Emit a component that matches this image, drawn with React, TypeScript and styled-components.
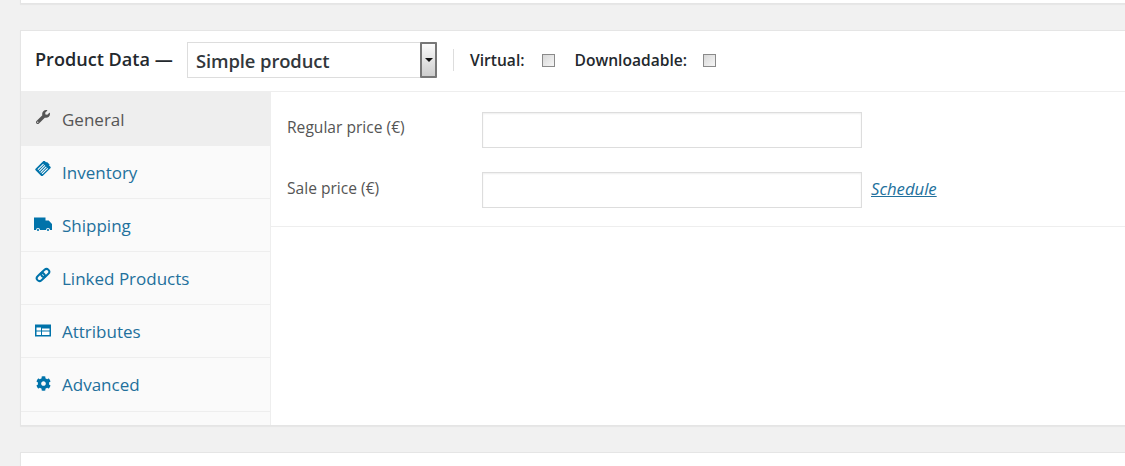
import React from "react";
import styled, { createGlobalStyle } from "styled-components";
import { FaWrench, FaCog } from "react-icons/fa";

const Global = createGlobalStyle`
  html, body { margin: 0; padding: 0; background: #f1f1f1; overflow: hidden; }
  body { width: 1125px; height: 466px; font-family: "Open Sans", "Liberation Sans", sans-serif; }
  * { box-sizing: border-box; }
`;

const Page = styled.div`
  width: 1125px;
  height: 466px;
  overflow: hidden;
  display: flex;
  flex-direction: column;
  padding-left: 20px;
`;

const Card = styled.section<{ $h: number }>`
  width: 1125px;
  flex: none;
  height: ${p => p.$h}px;
  background: #fff;
  border: 1px solid #e5e5e5;
  box-shadow: 0 1px 1px rgba(0, 0, 0, 0.04);
`;

const TopCard = styled(Card)`
  margin-top: -${p => p.$h - 4}px;
`;

const MainCard = styled(Card)`
  margin-top: 26px;
  display: flex;
  flex-direction: column;
`;

const BottomCard = styled(Card)`
  margin-top: 26px;
`;

const Header = styled.header`
  height: 61px;
  flex: none;
  display: flex;
  align-items: center;
  padding: 0 0 2px 14px;
  border-bottom: 1px solid #eee;
  color: #23282d;
`;

const Title = styled.h2`
  margin: -2px 14px 0 0;
  width: 138px;
  font-size: 18.1px;
  line-height: 24px;
  font-weight: 600;
  white-space: nowrap;
  color: #23282d;
`;

const SelectBox = styled.div`
  width: 250px;
  height: 36px;
  margin-right: 16px;
  display: flex;
  align-items: stretch;
  border: 1px solid #ddd;
  background: #fff;
`;

const SelectValue = styled.span`
  flex: 1;
  padding-left: 8px;
  font-size: 18.4px;
  font-weight: 600;
  line-height: 36px;
  color: #32373c;
  letter-spacing: -0.1px;
`;

const SelectArrow = styled.span`
  width: 17px;
  margin: -1px -1px -1px 0;
  display: flex;
  align-items: center;
  justify-content: center;
  border: 2px solid #777;
  border-radius: 1px;
  background: linear-gradient(#fbfbfb, #cdcdcd);
  &::after {
    content: "";
    border-left: 4px solid transparent;
    border-right: 4px solid transparent;
    border-top: 4px solid #111;
  }
`;

const Separator = styled.span`
  width: 1px;
  height: 22px;
  background: #ddd;
  margin-right: 16px;
`;

const CheckLabel = styled.label<{ $gap: number; $after: number }>`
  display: flex;
  align-items: center;
  gap: ${p => p.$gap}px;
  margin-right: ${p => p.$after}px;
  font-size: 15.6px;
  line-height: 20px;
  font-weight: 600;
  color: #23282d;
`;

const Check = styled.input.attrs({ type: "checkbox" })`
  appearance: none;
  margin: 1px 0 0;
  width: 13px;
  height: 13px;
  border: 1px solid #8a8a8a;
  background: linear-gradient(135deg, #d8d8d8, #f6f6f6);
`;

const Body = styled.div`
  flex: 1;
  display: flex;
  min-height: 0;
`;

const Tabs = styled.ul`
  list-style: none;
  margin: 0;
  padding: 0;
  width: 250px;
  flex: none;
  background: #fafafa;
  border-right: 1px solid #eee;
`;

const Tab = styled.li<{ $active?: boolean; $h: number }>`
  height: ${p => p.$h}px;
  display: flex;
  align-items: center;
  padding-left: 14px;
  padding-top: ${p => (p.$active ? 2 : 0)}px;
  gap: 11px;
  font-size: 17px;
  color: ${p => (p.$active ? "#555" : "#22709c")};
  background: ${p => (p.$active ? "#eee" : "transparent")};
  border-bottom: 1px solid #eee;
`;

const IconSlot = styled.span<{ $active?: boolean; $shift: number }>`
  width: 16px;
  height: 16px;
  margin-top: -${p => p.$shift * 2}px;
  flex: none;
  display: flex;
  align-items: center;
  justify-content: center;
  color: ${p => (p.$active ? "#555" : "#0073aa")};
  svg { display: block; flex: none; }
`;

const Panel = styled.div`
  flex: 1;
`;

const Fields = styled.div`
  height: 135px;
  padding-top: 20px;
  border-bottom: 1px solid #eee;
  display: flex;
  flex-direction: column;
  gap: 24px;
`;

const Field = styled.div`
  display: flex;
  align-items: center;
  height: 36px;
  padding-left: 16px;
`;

const FieldLabel = styled.label<{ $lift: number }>`
  width: 195px;
  flex: none;
  font-size: 15.6px;
  line-height: 20px;
  margin-top: -${p => p.$lift}px;
  color: #555;
`;

const TextInput = styled.input`
  width: 380px;
  height: 36px;
  flex: none;
  border: 1px solid #ddd;
  background: #fff;
  box-shadow: inset 0 1px 2px rgba(0, 0, 0, 0.07);
  outline: none;
`;

const ScheduleLink = styled.a`
  margin-left: 9px;
  margin-top: -4px;
  font-size: 16.7px;
  font-style: italic;
  color: #22709c;
  text-decoration: underline;
`;

const InventoryIcon = () => (
  <svg width="16" height="15" viewBox="0 0 16 15" fill="currentColor">
    <g transform="rotate(45 8 7.5)">
      <rect x="3" y="1" width="10" height="13" rx="1" />
      <rect x="6" y="0" width="4" height="2" rx="0.5" />
      <path d="M5.2 4v8M7.2 4v8M9.2 4v8M11.2 4v8" stroke="#fff" strokeWidth="1" />
    </g>
  </svg>
);

const TruckIcon = () => (
  <svg width="18" height="15" viewBox="0 0 18 15" fill="currentColor">
    <path d="M0 0.5h11.5v3h3.2l3.3 3.6v5.9H0z" />
    <circle cx="4" cy="13" r="2" fill="#fafafa" />
    <circle cx="14" cy="13" r="2" fill="#fafafa" />
    <circle cx="4" cy="13" r="1.1" />
    <circle cx="14" cy="13" r="1.1" />
  </svg>
);

const LinkIcon = () => (
  <svg width="16" height="16" viewBox="0 0 16 16" fill="none" stroke="currentColor" strokeWidth="2">
    <g transform="rotate(-43 8 8)">
      <rect x="0.5" y="5.2" width="9" height="5.6" rx="2.8" />
      <rect x="6.5" y="5.2" width="9" height="5.6" rx="2.8" />
    </g>
  </svg>
);

const AttributesIcon = () => (
  <svg width="16" height="13" viewBox="0 0 16 13" fill="currentColor">
    <rect x="0" y="0.5" width="16" height="12" />
    <path d="M1.5 3.5h4.5v3H1.5zM7 4.5h7.5v2H7zM1.5 7.5h4.5v3.5H1.5zM7 7.5h7.5v3.5H7z" fill="#fff" />
  </svg>
);

const tabs = [
  { label: "General", icon: <FaWrench size={14} />, active: true, h: 54, shift: 3 },
  { label: "Inventory", icon: <InventoryIcon />, h: 53, shift: 4 },
  { label: "Shipping", icon: <TruckIcon />, h: 53, shift: 1 },
  { label: "Linked Products", icon: <LinkIcon />, h: 53, shift: 3 },
  { label: "Attributes", icon: <AttributesIcon />, h: 53, shift: 1 },
  { label: "Advanced", icon: <FaCog size={15} />, h: 54, shift: 1 },
];

export default function App() {
  return (
    <>
      <Global />
      <Page>
        <TopCard $h={40} />
        <MainCard $h={396}>
          <Header>
            <Title>Product Data —</Title>
            <SelectBox>
              <SelectValue>Simple product</SelectValue>
              <SelectArrow />
            </SelectBox>
            <Separator />
            <CheckLabel $gap={17} $after={20}>
              Virtual:
              <Check />
            </CheckLabel>
            <CheckLabel $gap={16} $after={0}>
              Downloadable:
              <Check />
            </CheckLabel>
          </Header>
          <Body>
            <Tabs>
              {tabs.map(t => (
                <Tab key={t.label} $active={t.active} $h={t.h}>
                  <IconSlot $active={t.active} $shift={t.shift}>{t.icon}</IconSlot>
                  {t.label}
                </Tab>
              ))}
            </Tabs>
            <Panel>
              <Fields>
                <Field>
                  <FieldLabel $lift={6}>Regular price (€)</FieldLabel>
                  <TextInput />
                </Field>
                <Field>
                  <FieldLabel $lift={4}>Sale price (€)</FieldLabel>
                  <TextInput />
                  <ScheduleLink href="#">Schedule</ScheduleLink>
                </Field>
              </Fields>
            </Panel>
          </Body>
        </MainCard>
        <BottomCard $h={40} />
      </Page>
    </>
  );
}
